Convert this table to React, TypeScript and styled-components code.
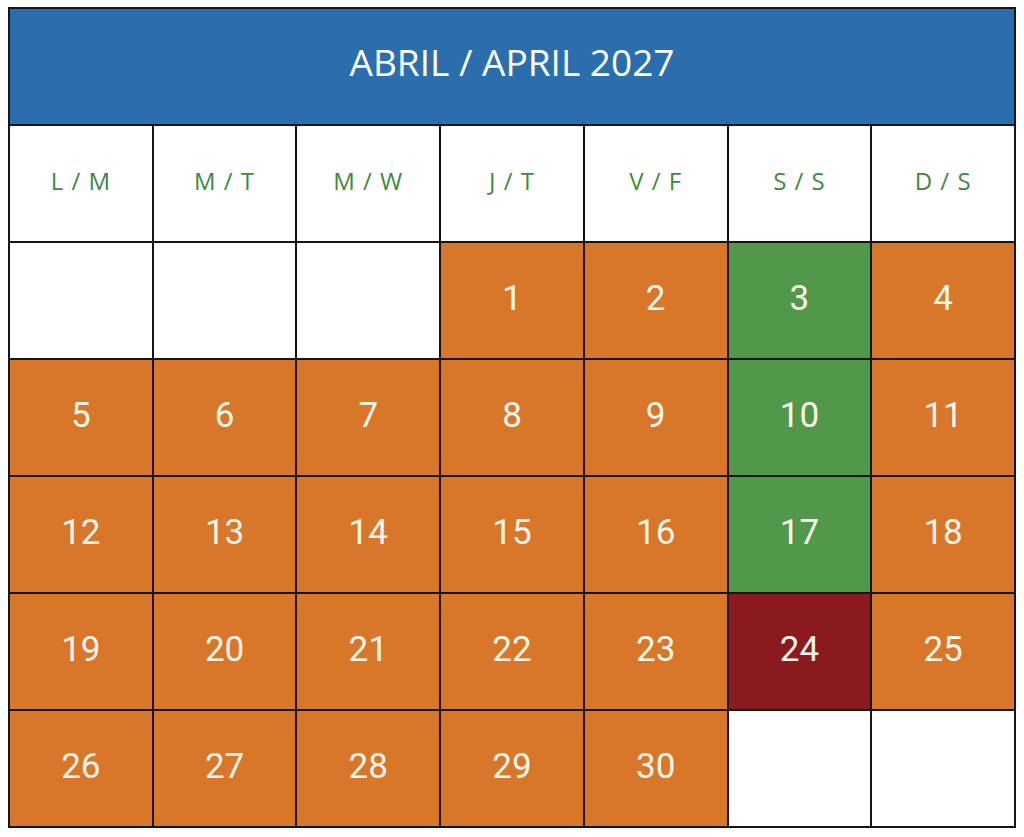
import React from 'react';
import styled, { createGlobalStyle } from 'styled-components';

const GlobalStyle = createGlobalStyle`
  html, body {
    margin: 0;
    padding: 0;
    background: #ffffff;
  }
`;

const Page = styled.div`
  padding: 7px 8px;
  font-family: "Open Sans", "Liberation Sans", sans-serif;
`;

const Calendar = styled.div`
  width: 1008px;
  box-sizing: border-box;
  display: grid;
  grid-template-columns: repeat(7, 1fr);
  grid-auto-rows: 115px;
  gap: 2px;
  border: 2px solid #151515;
  background: #151515;
`;

const Title = styled.div`
  grid-column: 1 / -1;
  background: #2b6eae;
  color: #ffffff;
  display: flex;
  align-items: center;
  justify-content: center;
  font-size: 37px;
  letter-spacing: 0;
  padding-bottom: 10px;
`;

const DayName = styled.div`
  background: #ffffff;
  color: #3d8a3d;
  display: flex;
  align-items: center;
  justify-content: center;
  font-size: 24px;
  letter-spacing: 1px;
  white-space: pre;
  padding-bottom: 6px;
`;

type Kind = 'empty' | 'work' | 'weekend' | 'holiday';

const colours: Record<Kind, string> = {
  empty: '#ffffff',
  work: '#d8762a',
  weekend: '#51984a',
  holiday: '#8a1a20',
};

const Day = styled.div<{ $kind: Kind }>`
  background: ${(p) => colours[p.$kind]};
  color: #fdf6ea;
  display: flex;
  align-items: center;
  justify-content: center;
  font-family: Roboto, "Open Sans", sans-serif;
  font-size: 35px;
  padding-bottom: 4px;
`;

const dayNames = ['L / M', 'M / T', 'M / W', 'J / T', 'V / F', 'S / S', 'D / S'];

const cells: (number | null)[] = [
  null, null, null,
  ...Array.from({ length: 30 }, (_, i) => i + 1),
  null, null,
];

const kindFor = (day: number | null, col: number): Kind => {
  if (day === null) return 'empty';
  if (day === 24) return 'holiday';
  if (col === 5) return 'weekend';
  return 'work';
};

const App: React.FC = () => (
  <Page>
    <GlobalStyle />
    <Calendar>
      <Title>ABRIL / APRIL 2027</Title>
      {dayNames.map((name, i) => (
        <DayName key={i}>{name}</DayName>
      ))}
      {cells.map((day, i) => (
        <Day key={i} $kind={kindFor(day, i % 7)}>
          {day}
        </Day>
      ))}
    </Calendar>
  </Page>
);

export default App;
